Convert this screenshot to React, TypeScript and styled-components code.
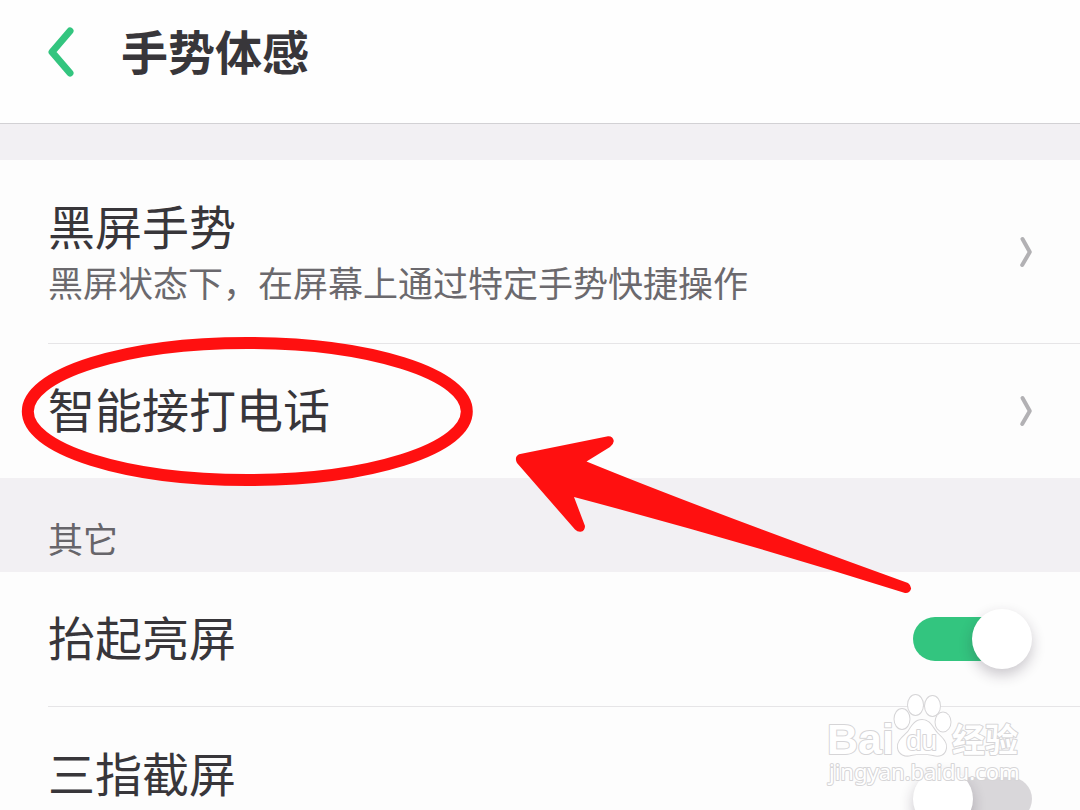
import React, { useState } from "react";
import styled, { createGlobalStyle } from "styled-components";

const GlobalStyle = createGlobalStyle`
  *, *::before, *::after { box-sizing: border-box; }
  body {
    margin: 0;
    background: #fdfdfd;
    color: #38363a;
    font-family: "Noto Sans CJK SC", "Noto Sans", sans-serif;
  }
  button { font: inherit; color: inherit; border: 0; background: none; padding: 0; cursor: pointer; }
`;

const Page = styled.main`
  position: relative;
  height: 100vh;
  overflow: hidden;
  background: #fdfdfd;
`;

const Header = styled.header`
  display: flex;
  align-items: center;
  gap: 39px;
  padding: 16px 40px 36px;
  background: #fefefe;
  border-bottom: 1px solid #d2d1d4;
`;

const BackButton = styled.button`
  display: flex;
  padding: 4px;
`;

const PageTitle = styled.h1`
  margin: 0;
  padding-bottom: 4px;
  font-size: 47px;
  line-height: 67px;
  font-weight: 700;
`;

const Band = styled.div`
  height: 36px;
  background: #f2f0f3;
`;

const SectionTitle = styled.h2`
  margin: 0;
  padding: 36px 48px 10px;
  background: #f2f0f3;
  color: #67656a;
  font-size: 35px;
  line-height: 48px;
  font-weight: 400;
`;

const List = styled.ul`
  margin: 0;
  padding: 0 0 0 48px;
  list-style: none;
`;

const Item = styled.li`
  & + & { border-top: 1px solid #e6e5e7; }
`;

const rowLayout = `
  display: flex;
  align-items: center;
  justify-content: space-between;
  width: 100%;
  text-align: left;
`;

const LinkRow = styled.button<{ $tall?: boolean }>`
  ${rowLayout}
  min-height: ${(p) => (p.$tall ? 183 : 134)}px;
  && { padding-right: 47px; }
`;

const SwitchRow = styled.label<{ $tall?: boolean }>`
  ${rowLayout}
  min-height: ${(p) => (p.$tall ? 183 : 134)}px;
  padding-right: 48px;
`;

const RowText = styled.span<{ $tall?: boolean }>`
  display: flex;
  flex-direction: column;
  min-height: ${(p) => (p.$tall ? 120 : 72)}px;
  padding-bottom: 6px;
`;

const RowTitle = styled.span`
  font-size: 47px;
  line-height: 66px;
`;

const RowNote = styled.span`
  color: #6b696d;
  font-size: 35px;
  line-height: 48px;
`;

const Switch = styled.input`
  appearance: none;
  position: relative;
  flex: none;
  width: 119px;
  height: 44px;
  margin: 0;
  border-radius: 22px;
  background: linear-gradient(#d9d7da, #d9d7da) right / 90px 100% no-repeat;

  &::after {
    content: "";
    position: absolute;
    top: -8px;
    left: 0;
    width: 60px;
    height: 60px;
    border-radius: 50%;
    background: #ffffff;
    box-shadow: 0 6px 14px rgba(40, 30, 50, 0.24);
  }
  &:checked { background: linear-gradient(#33c57f, #33c57f) left / 90px 100% no-repeat; }
  &:checked::after { left: auto; right: 0; }
`;

const Annotation = styled.svg`
  position: absolute;
  top: 330px;
  left: 0;
  pointer-events: none;
`;

const Watermark = styled.svg`
  position: absolute;
  right: 52px;
  bottom: 20px;
  pointer-events: none;
`;

const Chevron = () => (
  <svg width="14" height="32" viewBox="0 0 14 32" fill="none" stroke="#b2b1b4" strokeWidth="4" strokeLinecap="round" strokeLinejoin="round" aria-hidden="true">
    <path d="M3.5 3 L10.8 16 L3.2 29" />
  </svg>
);

export default function App() {
  const [raise, setRaise] = useState(true);
  const [capture, setCapture] = useState(false);

  return (
    <>
      <GlobalStyle />
      <Page>
        <Header>
          <BackButton aria-label="返回">
            <svg width="34" height="52" viewBox="0 0 34 52" fill="none" stroke="#33c57f" strokeWidth="7" strokeLinecap="round" strokeLinejoin="round">
              <path d="M26 5 L8 26 L26 47" />
            </svg>
          </BackButton>
          <PageTitle>手势体感</PageTitle>
        </Header>
        <Band />
        <List>
          <Item>
            <LinkRow $tall>
              <RowText $tall>
                <RowTitle>黑屏手势</RowTitle>
                <RowNote>黑屏状态下，在屏幕上通过特定手势快捷操作</RowNote>
              </RowText>
              <Chevron />
            </LinkRow>
          </Item>
          <Item>
            <LinkRow>
              <RowText>
                <RowTitle>智能接打电话</RowTitle>
              </RowText>
              <Chevron />
            </LinkRow>
          </Item>
        </List>
        <SectionTitle>其它</SectionTitle>
        <List>
          <Item>
            <SwitchRow>
              <RowText>
                <RowTitle>抬起亮屏</RowTitle>
              </RowText>
              <Switch type="checkbox" checked={raise} onChange={(e) => setRaise(e.target.checked)} />
            </SwitchRow>
          </Item>
          <Item>
            <SwitchRow $tall>
              <RowText $tall>
                <RowTitle>三指截屏</RowTitle>
              </RowText>
              <Switch type="checkbox" checked={capture} onChange={(e) => setCapture(e.target.checked)} />
            </SwitchRow>
          </Item>
        </List>

        <Annotation width="930" height="280" viewBox="0 330 930 280" aria-hidden="true">
          <ellipse cx="247.3" cy="411.5" rx="219.5" ry="68.5" fill="none" stroke="#ff1010" strokeWidth="12" />
          <path
            d="M519 454.3 L608 436.3 Q613 436 613.8 441 Q613.5 444.5 610 447 L586.5 461.5 Q700 508 908 583 Q911.5 585.5 911 589 Q909.5 593.5 905 593 Q740 541 574 497 L585 526 Q585 531 580.5 531.8 Q577.5 532 575 529.5 L517 463 Q514 457 519 454.3 Z"
            fill="#ff1010"
          />
        </Annotation>

        <Watermark width="204" height="100" viewBox="824 690 204 100" fill="#ffffff" stroke="#d6d5d7" strokeWidth="2" strokeLinejoin="round" paintOrder="stroke" aria-hidden="true">
          <text x="827" y="754" fontFamily="Liberation Sans, sans-serif" fontWeight="700" fontSize="43">Bai</text>
          <ellipse cx="902" cy="719" rx="7.5" ry="10" />
          <ellipse cx="915.5" cy="705" rx="7.5" ry="10" />
          <ellipse cx="932.5" cy="706" rx="7.5" ry="10" />
          <ellipse cx="943" cy="722" rx="7.5" ry="9.5" />
          <path d="M922 720 C930 720 932 727 937 733 C942 738 947 742 946 748 C945 755 939 757 933 755 C926 753.5 918 753.5 911 755 C905 757 899 754 898 748 C897 741 903 737 908 732 C912 726 915 720 922 720 Z" />
          <text x="906" y="750" fontFamily="Liberation Sans, sans-serif" fontSize="28">du</text>
          <text x="952" y="752" fontFamily="Noto Sans CJK SC, sans-serif" fontWeight="700" fontSize="33">经验</text>
          <text x="829" y="780" fontFamily="Noto Sans, sans-serif" fontSize="22">jingyan.baidu.com</text>
        </Watermark>
      </Page>
    </>
  );
}
